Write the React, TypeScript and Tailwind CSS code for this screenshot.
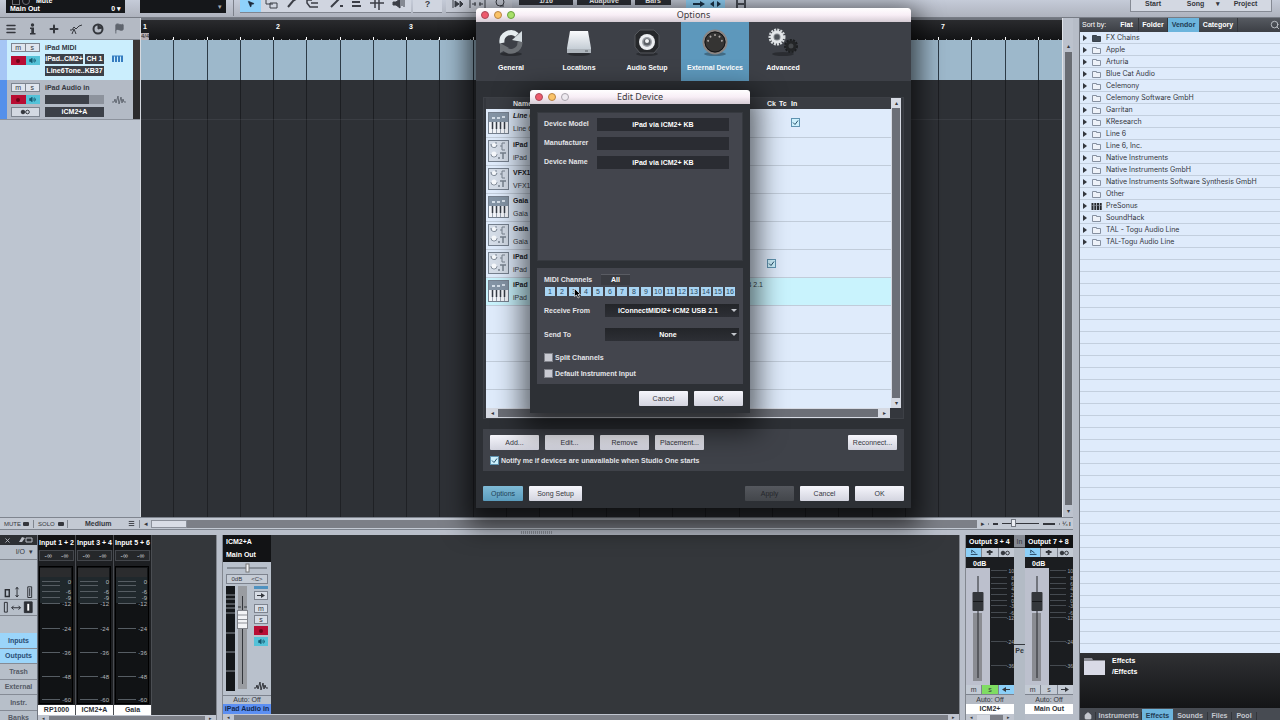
import React from "react";
import clsx from "clsx";
import {
  Flag,
  House,
  Menu,
  MousePointer2,
  Plus,
  Search,
  Volume2,
  X,
} from "lucide-react";

const vendors = [
  "FX Chains",
  "Apple",
  "Arturia",
  "Blue Cat Audio",
  "Celemony",
  "Celemony Software GmbH",
  "Garritan",
  "KResearch",
  "Line 6",
  "Line 6, Inc.",
  "Native Instruments",
  "Native Instruments GmbH",
  "Native Instruments Software Synthesis GmbH",
  "Other",
  "PreSonus",
  "SoundHack",
  "TAL - Togu Audio Line",
  "TAL-Togu Audio Line",
];

const devices = [
  { name: "Line 6", sub: "Line 6", keys: true, input: true, italic: true },
  { name: "iPad", sub: "iPad" },
  { name: "VFX1", sub: "VFX1" },
  { name: "Gaia", sub: "Gaia", keys: true },
  { name: "Gaia", sub: "Gaia" },
  { name: "iPad", sub: "iPad", clock: true },
  { name: "iPad", sub: "iPad", keys: true, selected: true, port: "USB 2.1" },
];

const inputs = [
  { title: "Input 1 + 2", label: "RP1000" },
  { title: "Input 3 + 4", label: "ICM2+A" },
  { title: "Input 5 + 6", label: "Gaia" },
];

const scale = [
  { y: 17, label: "0" },
  { y: 21, label: "" },
  { y: 27, label: "-6" },
  { y: 33, label: "-9" },
  { y: 39, label: "-12" },
  { y: 64, label: "-24" },
  { y: 88, label: "-36" },
  { y: 112, label: "-48" },
  { y: 135, label: "-60" },
];

const outScale = [
  { y: 3, label: "10" },
  { y: 10, label: "8" },
  { y: 16, label: "6" },
  { y: 21, label: "4" },
  { y: 27, label: "2" },
  { y: 33, label: "0" },
  { y: 38, label: "-3" },
  { y: 45, label: "-6" },
  { y: 50, label: "-12" },
  { y: 74, label: "-24" },
  { y: 98, label: "-36" },
];

type ButtonProps = {
  children: React.ReactNode;
  className?: string;
};

function PushButton({ children, className }: ButtonProps) {
  return (
    <button
      className={clsx(
        "h-[15px] rounded-[1px] text-center whitespace-nowrap",
        className ||
          "w-[49px] bg-linear-to-b from-[#f6f6fc] to-[#d3d4df] text-[#34363d]",
      )}
    >
      {children}
    </button>
  );
}

function Lights({ inactive }: { inactive?: boolean }) {
  return (
    <div className="absolute top-[3px] left-[5px] flex gap-[5px]">
      <span className="size-2 rounded-full border border-[#a8495a] bg-[#ee5a6d]" />
      <span className="size-2 rounded-full border border-[#b98443] bg-[#fbc368]" />
      <span
        className={clsx(
          "size-2 rounded-full border",
          inactive
            ? "border-[#a9a4ac] bg-[#eeeaf0]"
            : "border-[#6aa03f] bg-[#a8e069]",
        )}
      />
    </div>
  );
}

function TitleBar({ title, inactive }: { title: string; inactive?: boolean }) {
  return (
    <div className="relative h-[14px] rounded-t-[3px] bg-linear-to-b from-white via-[#f8eef6] to-[#d5ccd4] text-center font-['Noto_Sans',sans-serif] text-[9px] leading-[14px] text-[#3c3a40]">
      <Lights inactive={inactive} />
      {title}
    </div>
  );
}

function Tick({ checked, id }: { checked?: boolean; id: string }) {
  return (
    <span className="relative block size-[9px] shrink-0">
      <input
        id={id}
        type="checkbox"
        aria-label={id}
        defaultChecked={checked}
        className="block size-[9px] appearance-none border border-[#82848c] bg-[#c9cad2] checked:border-[#5f93b0] checked:bg-[#cdf0fc]"
      />
      {checked && (
        <svg
          viewBox="0 0 9 9"
          className="pointer-events-none absolute inset-0 size-[9px]"
        >
          <path d="M2 4.5 4 6.5 7 2.5" fill="none" stroke="#25506b" />
        </svg>
      )}
    </span>
  );
}

function Waves({ color = "#646a74" }: { color?: string }) {
  return (
    <svg viewBox="0 0 14 10" className="h-[10px] w-[14px]">
      <path
        d="M0 7h2l1-3 1 4 2-7 1 8 2-7 1 6 1-4 1 3h2"
        fill="none"
        stroke={color}
      />
    </svg>
  );
}

function StereoDots() {
  return (
    <svg viewBox="0 0 12 6" className="h-[6px] w-3">
      <circle cx="3" cy="3" r="1.8" fill="#34373d" stroke="#34373d" />
      <circle cx="7.5" cy="3" r="1.8" fill="none" stroke="#34373d" />
    </svg>
  );
}

// small m / s / rec / monitor buttons
function MiniButtons() {
  return (
    <div className="grid w-[29px] grid-cols-2">
      <button className="h-[9px] border border-[#7d8590] bg-[#dfe5ee] leading-[7px]">
        m
      </button>
      <button className="h-[9px] border border-l-0 border-[#7d8590] bg-[#dfe5ee] leading-[7px]">
        s
      </button>
    </div>
  );
}

function RecButtons() {
  return (
    <div className="grid h-[9px] w-[29px] grid-cols-2">
      <button
        aria-label="Record"
        className="flex items-center justify-center bg-[#b80d34]"
      >
        <span className="size-1 rounded-full bg-[#6d0419]" />
      </button>
      <button
        aria-label="Monitor"
        className="flex items-center justify-center bg-[#54c2d8]"
      >
        <Volume2 className="size-[7px] fill-[#155a70] text-[#155a70]" />
      </button>
    </div>
  );
}

const field =
  "bg-[#3c4048] text-white font-bold text-center h-[10px] leading-[10px] whitespace-nowrap overflow-hidden";

function TopBar() {
  return (
    <header className="flex h-[18px] shrink-0 items-start overflow-hidden border-b border-[#777c85] bg-linear-to-b from-[#c5cbd8] to-[#aeb3be]">
      <div className="flex w-[140px] pl-[6px]">
        <div className="flex h-[13px] w-[119px] flex-col justify-end bg-[#15171a] px-1 font-bold text-white">
          <div className="flex items-center gap-[2px] pl-[2px]">
            <span className="size-[8px] border border-[#6a6d73]" />
            <span className="size-[8px] rounded-full border border-[#6a6d73]" />
            <span className="pl-1">Mute</span>
          </div>
          <div className="flex justify-between">
            <span>Main Out</span>
            <span>0 ▾</span>
          </div>
        </div>
      </div>
      <div className="flex h-[13px] w-[86px] items-center justify-end bg-[#15171a] pr-1 text-[#a8abb2]">
        ▾
      </div>
      <div className="ml-[7px] h-4 w-px bg-[#7c818b]" />
      <div className="ml-[6px] flex h-[13px] w-[171px] border-b border-[#80858f] bg-[#d0d5e0] text-[#3b3e46]">
        <div className="flex h-3 w-[21px] justify-center bg-[#8fd2fb]">
          <MousePointer2 className="size-2 fill-[#1c2a3c] text-[#1c2a3c]" />
        </div>
        <svg
          viewBox="0 0 150 12"
          className="h-3 w-[150px]"
          fill="none"
          stroke="currentColor"
        >
          <path d="M5 0v4h7M9 3h7v5h-7z" />
          <path d="M27 7 32 1l3-2" strokeWidth="2" />
          <path d="M51 0h-5v3l3 4h8M50 3h7" strokeWidth="1.5" />
          <path d="M70 7 78-1M79 6h3" strokeWidth="2" />
          <path d="M91 2h8M91 6h9" strokeWidth="2" />
          <path d="M109 3h14M114 0v8M118 0v10" strokeWidth="1.5" />
          <path d="M132 2h3l4-3v9l-4-3h-3z" fill="currentColor" />
          <path d="M141 0v6M143-1v8" />
        </svg>
      </div>
      <div className="ml-[2px] h-[13px] w-[29px] border-b border-[#80858f] bg-[#d0d5e0] text-center text-[9px] font-bold text-[#3b3e46]">
        ?
      </div>
      <div className="ml-1 h-[13px] w-[66px] border-b border-[#80858f] bg-[#c8cdd8] text-[#3b3e46]">
        <svg
          viewBox="0 0 66 12"
          className="h-3 w-[66px]"
          fill="currentColor"
          stroke="currentColor"
        >
          <path d="M7 0v8M9 1l4 3-4 3zM14 1l3 3-3 3zM24 0v8M39 0v8" />
          <path d="M26 4h4M33 4h4M29 2v4M34 2v4" />
          <circle cx="54" cy="2" r="4" fill="none" />
          <path d="M54 6h4" />
        </svg>
      </div>
      <div className="ml-[7px] flex gap-[4px] font-bold text-white">
        {["1/16", "Adaptive", "Bars"].map((item) => (
          <div
            key={item}
            className="flex h-[5px] w-[54px] items-end justify-center overflow-hidden bg-[#2d3036] last:w-[36px]"
          >
            {item}
          </div>
        ))}
      </div>
      <div className="ml-[15px] flex h-2 w-[39px] justify-evenly bg-[#92d4fa]">
        <svg viewBox="0 0 30 8" className="h-2 w-[30px]" fill="#1b354b">
          <path d="M2 3h7V1l5 3-5 3V5H2zM19 4l4-3v6zM30 4l-4-3v6z" />
        </svg>
      </div>
      <svg
        viewBox="0 0 10 8"
        className="ml-[11px] h-2 w-[10px]"
        fill="none"
        stroke="#4b4f58"
        strokeWidth="2"
      >
        <path d="M1 0v8M9 0v8M1 4h8" />
      </svg>
      <nav className="mr-2 ml-auto flex h-[12px] w-[142px] items-center border border-t-0 border-[#858a94] bg-[#d3d8e2] pb-1 font-bold text-[#34363c]">
        <button className="w-[44px]">Start</button>
        <button className="w-[41px]">Song</button>
        <span>▾</span>
        <button className="flex-1">Project</button>
      </nav>
    </header>
  );
}

function TrackList() {
  return (
    <div className="flex w-[140px] shrink-0 flex-col bg-[#bdc5d0] text-[#34373d]">
      <div className="flex h-[22px] shrink-0 items-center gap-[10px] border-b border-[#858b95] bg-[#b4bac4] px-[5px]">
        <Menu className="size-3" strokeWidth={3} />
        <svg viewBox="0 0 11 12" className="h-3 w-[11px]" fill="currentColor">
          <circle cx="5.5" cy="2" r="1.700" />
          <path d="M3 4.500h4V10h1.500v1.500H3V10h1.300V6H3z" />
        </svg>
        <Plus className="size-3" strokeWidth={4} />
        <svg
          viewBox="0 0 12 12"
          className="size-3"
          fill="none"
          stroke="currentColor"
        >
          <path d="M0 7h2l2-3 2 2 3-3 3-1M2 11l2-5 2 5" />
        </svg>
        <svg
          viewBox="0 0 12 12"
          className="size-3"
          fill="none"
          stroke="currentColor"
        >
          <circle cx="6" cy="6" r="4.500" strokeWidth="2" />
          <path d="M6 2v4l4-1z" fill="currentColor" />
        </svg>
        <Flag className="size-[11px] fill-[#5f656e] text-[#5f656e]" />
      </div>

      {/* iPad MIDI */}
      <div className="flex h-10 bg-[#cbeefd]">
        <div className="w-[7px] bg-[#a6c6f5]" />
        <div className="ml-1 flex w-[34px] flex-col gap-1 pt-[3px]">
          <MiniButtons />
          <RecButtons />
        </div>
        <div className="flex w-[59px] flex-col gap-[2px] pt-[3px]">
          <span className="h-[9px] leading-[9px] font-bold">iPad MIDI</span>
          <div className="flex gap-[2px]">
            <div className={clsx(field, "w-[38px]")}>iPad..CM2+</div>
            <div className={clsx(field, "flex-1")}>CH 1</div>
          </div>
          <div className={field}>Line6Tone..KB37</div>
        </div>
        <svg viewBox="0 0 11 8" className="mt-[15px] ml-2 h-2 w-[11px]">
          <path d="M1 1v6M4 1v6M7 1v6M10 1v6" stroke="#357cc0" strokeWidth="2" />
          <path d="M0 1h11" stroke="#357cc0" />
        </svg>
        <div className="ml-auto w-[7px] bg-[#3a3736]" />
      </div>

      {/* iPad Audio in */}
      <div className="flex h-10 border-b border-[#8c929c] bg-[#b3bac5]">
        <div className="w-[7px] bg-[#5590ea]" />
        <div className="ml-1 flex w-[34px] flex-col gap-[3px] pt-[3px]">
          <MiniButtons />
          <RecButtons />
          <button
            aria-label="Stereo"
            className="flex h-[10px] w-[29px] items-center justify-center border border-[#7d8590] bg-[#d3d9e2]"
          >
            <StereoDots />
          </button>
        </div>
        <div className="flex w-[59px] flex-col gap-[3px] pt-[3px]">
          <span className="h-[9px] leading-[9px] font-bold">iPad Audio in</span>
          <div className="h-[9px] bg-[#8d939d]">
            <div className="h-full w-3/4 bg-[#3c4048]" />
          </div>
          <div className={field}>iCM2+A</div>
        </div>
        <div className="mt-[15px] ml-2">
          <Waves />
        </div>
        <div className="ml-auto w-[7px] bg-[#2b2b2d]" />
      </div>
    </div>
  );
}

function Timeline() {
  return (
    <div className="relative isolate flex min-w-0 flex-1 overflow-hidden border-l border-[#d5d9df] bg-[#2e3136]">
      {[1, 2, 3, 4, 5, 6, 7].map((bar) => (
        <div key={bar} className="flex w-[133px] shrink-0 flex-col">
          <div className="relative h-[22px] border-t-2 border-[#70757e] bg-linear-to-b from-[#2a2b2e] to-[#131416] text-white">
            <span className="block pt-[3px] pl-[2px] font-bold">{bar}</span>
            {bar === 1 && (
              <span className="absolute bottom-0 left-0 h-[7px] bg-[#b9b0b4] text-[6px] leading-[7px] text-[#28282b]">
                4/4
              </span>
            )}
            <div className="absolute inset-x-0 bottom-0 h-px bg-[repeating-linear-gradient(to_right,transparent_0_7px,#9b9da2_7px_8px)]" />
          </div>
          <div className="grid flex-1 grid-cols-4">
            {[0, 1, 2, 3].map((beat) => (
              <div key={beat} className="flex flex-col">
                <div className="z-1 -mt-[3px] h-[3px] border-r border-white" />
                <div className="h-10 border-r border-[#2d3b47] bg-[#9db8cb]" />
                <div className="h-10 border-r border-b border-[#1c1e22] border-b-[#3a3d43]" />
                <div className="flex-1 border-r border-[#1f2125]" />
              </div>
            ))}
          </div>
        </div>
      ))}
    </div>
  );
}

function ScrollH({ thumb }: { thumb: string }) {
  return (
    <div className="flex h-[6px] shrink-0 items-center bg-[#c0c5cf] text-[5px] leading-[6px] text-[#34363c]">
      <span className="w-[11px] text-center">◂</span>
      <div className="h-[5px] flex-1 bg-[#7d8088]">
        <div className={clsx("h-full bg-[#d4d8e1]", thumb)} />
      </div>
      <span className="w-[11px] text-center">▸</span>
    </div>
  );
}

function BottomBar() {
  return (
    <div className="flex h-[13px] shrink-0 items-center border-y border-[#7f858f] bg-[#c3c9d3] text-[#34363c]">
      <div className="flex w-[34px] items-center gap-[2px] border-r border-[#7f858f] pl-1 text-[6px]">
        MUTE <span className="h-1 w-[6px] rounded-[1px] bg-[#34363c]" />
      </div>
      <div className="flex w-[34px] items-center gap-[3px] border-r border-[#7f858f] pl-1 text-[6px]">
        SOLO <span className="h-1 w-[6px] rounded-[1px] bg-[#34363c]" />
      </div>
      <div className="flex w-[72px] items-center justify-between border-r border-[#7f858f] pr-1 pl-[17px] font-bold">
        Medium <Menu className="size-[7px]" strokeWidth={3} />
      </div>
      <span className="w-[11px] text-center">◂</span>
      <div className="h-[8px] flex-1 bg-[#7c7f87]">
        <div className="h-full w-[36px] rounded-[1px] border border-[#8b909a] bg-[#d9dde6]" />
      </div>
      <span className="w-[11px] text-center">▸</span>
      <div className="flex w-[72px] items-center gap-1 border-x border-[#7f858f] px-1">
        <span className="h-[2px] w-[5px] bg-[#34363c]" />
        <div className="relative h-px flex-1 bg-[#34363c]">
          <span className="absolute -top-1 left-[9px] h-[8px] w-[5px] border border-[#757a84] bg-[#eceef4]" />
        </div>
        <span className="h-[2px] w-[12px] bg-[#34363c]" />
      </div>
      <span className="w-[13px] text-center text-[6px] font-bold">¼ I</span>
    </div>
  );
}

function MixerTabs() {
  return (
    <div className="flex w-[38px] shrink-0 flex-col border-r border-[#70757e] bg-[#b7bfc9] text-[#34373d]">
      <div className="flex h-[10px] shrink-0 items-center justify-around bg-[#2d3034] text-[#b9bdc5]">
        <X className="size-[7px]" strokeWidth={3} />
        <svg viewBox="0 0 15 6" className="h-[6px] w-[15px]">
          <path d="M1 5 4 0l3 1-3 4z" fill="currentColor" />
          <path d="M8 1h6v4H8z" fill="none" stroke="currentColor" />
        </svg>
      </div>
      <button className="flex h-[15px] shrink-0 items-center justify-end gap-1 border-b border-[#80868f] pr-1">
        I/O <span>▾</span>
      </button>
      <div className="flex h-[56px] shrink-0 flex-col justify-end border-b border-[#80868f]">
        <svg
          viewBox="0 0 38 34"
          className="h-[34px] w-full"
          fill="none"
          stroke="#2d3036"
        >
          <path d="M5.5 8.500h4v7h-4z" strokeWidth="1.500" />
          <path d="M17.500 6v10M16 8l1.500-2 1.500 2M16 14l1.500 2 1.500-2" />
          <path d="M28.500 5.500h4v11h-4zM30.500 7v8" />
          <path d="M0 18.500h38" stroke="#80868f" />
          <path d="M4.500 21.500h3v10h-3z" />
          <path d="M12 27h9M14 25l-2 2 2 2M19 25l2 2-2 2" />
          <path d="M25 21h8v11h-8z" fill="#2d3036" />
          <path d="M29 23v7" stroke="#fff" strokeWidth="2" />
        </svg>
      </div>
      <div className="mt-[17px] grid h-[93px] shrink-0 grid-rows-6 font-bold">
        {["Inputs", "Outputs", "Trash", "External", "Instr.", "Banks"].map(
          (item, index) => (
            <button
              key={item}
              className={clsx(
                "border-b border-[#858b95] pt-px text-center",
                index < 2 ? "bg-[#9bd5fa] text-[#2b4e75]" : "text-[#555b66]",
              )}
            >
              {item}
            </button>
          ),
        )}
      </div>
    </div>
  );
}

function InputChannel({ title, label }: { title: string; label: string }) {
  return (
    <div className="flex w-[38px] shrink-0 flex-col border-r border-[#4a4d52] bg-[#1d1f22]">
      <div className="h-[15px] bg-[#111214] text-center leading-[15px] font-bold whitespace-nowrap text-white">
        {title}
      </div>
      <div className="mx-px flex h-[11px] justify-around border border-[#44474c] bg-[#25272a] leading-[9px] text-[#d2d4d9]">
        <span>-∞</span>
        <span>-∞</span>
      </div>
      <div className="flex-1 pt-1">
        <svg viewBox="0 0 37 140" className="h-[140px] w-[37px]">
          <rect x="1" y="1" width="34" height="138" fill="#111315" />
          <rect x="2" y="3" width="31" height="9" fill="#2b2c2e" />
          <rect x="2" y="12" width="31" height="26" fill="#20282c" />
          <rect
            x="1.500"
            y="1.500"
            width="33"
            height="137"
            fill="none"
            stroke="#000"
            strokeWidth="1"
          />
          {scale.map((s) => (
            <g key={s.y}>
              <path d={`M4 ${s.y - 0.5}H22`} stroke="#565d63" />
              <text
                x="33"
                y={s.y + 2}
                textAnchor="end"
                fontSize="6"
                fill="#b4b9be"
              >
                {s.label}
              </text>
            </g>
          ))}
        </svg>
      </div>
      <div className="h-[10px] bg-white text-center leading-[10px] font-bold text-[#2d2f34]">
        {label}
      </div>
    </div>
  );
}

function AudioChannel() {
  return (
    <div className="flex w-[48px] shrink-0 flex-col bg-[#b9c1cc]">
      <div className="flex h-[27px] flex-col justify-around bg-[#121315] pl-[3px] font-bold text-white">
        <span>ICM2+A</span>
        <span>Main Out</span>
      </div>
      <svg viewBox="0 0 48 12" className="h-3 w-full">
        <path d="M4 6h40" stroke="#555a63" />
        <rect x="23" y="2" width="3" height="8" fill="#f4f5f8" stroke="#777" />
      </svg>
      <div className="mx-[3px] flex h-[10px] items-center justify-around border border-[#7d838e] bg-[#c5ccd6] text-[6px] text-[#34373d]">
        <span>0dB</span>
        <span>&lt;C&gt;</span>
      </div>
      <div className="flex flex-1 gap-[2px] px-[3px] pt-[2px]">
        <svg viewBox="0 0 24 106" className="h-[106px] w-6">
          <rect x="0" y="0" width="9" height="105" fill="#14171a" />
          <path
            d="M0 9h9M0 13h9M0 18h9M0 22h9M0 27h9M0 47h9M0 66h9M0 85h9"
            stroke="#8b9299"
          />
          <rect x="12" y="0" width="9" height="103" fill="#999ca1" />
          <path d="M16.500 10v88M12 21h3M18 21h3" stroke="#33363b" />
          <rect
            x="11.500"
            y="24.500"
            width="10"
            height="18"
            fill="#f2f3f6"
            stroke="#80838a"
          />
          <path d="M12 29h9M12 33.500h9M12 37h9" stroke="#8c8f96" />
        </svg>
        <div className="flex flex-1 flex-col items-end gap-[2px] text-[#34373d]">
          <span className="h-[3px] w-[14px] bg-[#4f92c0]" />
          <button
            aria-label="Send"
            className="flex h-[9px] w-[14px] items-center justify-center border border-[#7d838e] bg-[#d7dde6]"
          >
            <svg viewBox="0 0 8 5" className="h-[5px] w-2" fill="#34373d">
              <path d="M0 2h4V0l4 2.500L4 5V3H0z" />
            </svg>
          </button>
          <button className="mt-[2px] h-[9px] w-[14px] border border-[#7d838e] bg-[#d7dde6] leading-[7px]">
            m
          </button>
          <button className="h-[9px] w-[14px] border border-[#7d838e] bg-[#d7dde6] leading-[7px]">
            s
          </button>
          <button
            aria-label="Arm"
            className="flex h-[9px] w-[14px] items-center justify-center bg-[#b80d34]"
          >
            <span className="size-1 rounded-full bg-[#6d0419]" />
          </button>
          <button
            aria-label="Listen"
            className="flex h-[9px] w-[14px] items-center justify-center bg-[#54c2d8]"
          >
            <Volume2 className="size-[7px] fill-[#155a70] text-[#155a70]" />
          </button>
          <span className="mt-auto mb-1">
            <Waves color="#34373d" />
          </span>
        </div>
      </div>
      <div className="h-[9px] border-t border-[#7d838e] text-center text-[#34373d]">
        Auto: Off
      </div>
      <div className="h-[10px] bg-[#5c8ff2] text-center leading-[10px] font-bold whitespace-nowrap text-[#10284f]">
        iPad Audio in
      </div>
    </div>
  );
}

type OutputProps = { title: string; label: string; solo?: boolean };

function OutputChannel({ title, label, solo }: OutputProps) {
  return (
    <div className="flex w-[48px] shrink-0 flex-col bg-[#1b1d20]">
      <div className="h-[13px] bg-[#111214] pl-[3px] leading-[13px] font-bold whitespace-nowrap text-white">
        {title}
      </div>
      <div className="grid h-[9px] grid-cols-3 gap-px bg-[#7d838e]">
        <button aria-label="Link" className="bg-[#8ccff7]">
          <svg viewBox="0 0 16 9" className="h-[9px] w-full">
            <path d="M5 6.500h7M6 5V2l4 3" stroke="#23425c" fill="none" />
          </svg>
        </button>
        <button aria-label="Pin" className="bg-[#c3cad4]">
          <svg viewBox="0 0 16 9" className="h-[9px] w-full">
            <path d="M5 4h6M8 2v5" stroke="#34373d" strokeWidth="2" />
          </svg>
        </button>
        <button
          aria-label="Stereo out"
          className="flex items-center justify-center bg-[#c3cad4]"
        >
          <StereoDots />
        </button>
      </div>
      <div className="h-[11px] pl-[7px] leading-[13px] font-bold text-white">0dB</div>
      <div className="flex-1">
        <svg viewBox="0 0 48 117" className="h-[117px] w-full">
          <rect x="0" y="0" width="24" height="117" fill="#bcc0cd" />
          <rect x="7" y="45" width="9" height="68" fill="#8a8c92" />
          <path d="M12 8v102" stroke="#26282c" />
          <rect x="6.500" y="24" width="11" height="19" rx="1" fill="#34373b" />
          <path d="M7 33.500h10" stroke="#16171a" />
          {outScale.map((s) => (
            <g key={s.y}>
              <path d={`M25 ${s.y - 0.5}H41`} stroke="#454a50" />
              <text
                x="48"
                y={s.y + 2}
                textAnchor="end"
                fontSize="5"
                fill="#a2a7ad"
              >
                {s.label}
              </text>
            </g>
          ))}
        </svg>
      </div>
      <div className="grid h-[9px] grid-cols-3 gap-px bg-[#7d838e] text-[#34373d]">
        <button className="bg-[#c3cad4]">m</button>
        <button className={solo ? "bg-[#7fdc62]" : "bg-[#c3cad4]"}>s</button>
        <button
          aria-label="Route"
          className={clsx(
            "flex items-center justify-center",
            solo ? "bg-[#8ccff7]" : "bg-[#c3cad4]",
          )}
        >
          <svg viewBox="0 0 8 5" className="h-[5px] w-2" fill="#34373d">
            <path
              d={
                solo
                  ? "M8 2H4V0L0 2.500 4 5V3h4z"
                  : "M0 2h4V0l4 2.500L4 5V3H0z"
              }
            />
          </svg>
        </button>
      </div>
      <div className="h-[10px] border-t border-[#7d838e] bg-[#b4bac4] text-center leading-[9px] text-[#34373d]">
        Auto: Off
      </div>
      <div className="h-[10px] bg-white text-center leading-[10px] font-bold text-[#2d2f34]">
        {label}
      </div>
    </div>
  );
}

function Mixer() {
  return (
    <div className="flex h-[185px] shrink-0 overflow-hidden bg-[#34373b]">
      <MixerTabs />
      <div className="flex w-[178px] shrink-0 flex-col">
        <div className="flex flex-1">
          {inputs.map((item) => (
            <InputChannel key={item.label} {...item} />
          ))}
        </div>
        <ScrollH thumb="w-0" />
      </div>
      <div className="w-[7px] shrink-0 border-x border-[#82878f] bg-[#b9bfca]" />
      <div className="flex min-w-0 flex-1 flex-col">
        <div className="flex flex-1">
          <AudioChannel />
        </div>
        <ScrollH thumb="w-0" />
      </div>
      <div className="w-[7px] shrink-0 border-x border-[#82878f] bg-[#b9bfca]" />
      <div className="flex w-[107px] shrink-0">
        <div className="flex w-[48px] flex-col">
          <div className="flex flex-1">
            <OutputChannel title="Output 3 + 4" label="ICM2+" solo />
          </div>
          <ScrollH thumb="w-1/2" />
        </div>
        <div className="flex w-[11px] flex-col bg-[#b3bbc5] text-[#34373d]">
          <div className="h-[13px] border-b border-[#34373d] bg-[#858a93] text-center leading-[13px]">
            In
          </div>
          <div className="mt-auto h-[76px] border-t border-[#34373d] pt-[2px] text-center font-bold">
            Pe
          </div>
        </div>
        <div className="flex w-[48px] bg-[#b7bdc8] pb-[6px]">
          <OutputChannel title="Output 7 + 8" label="Main Out" />
        </div>
      </div>
    </div>
  );
}

function Browser() {
  return (
    <aside className="flex w-[201px] shrink-0 flex-col border-l border-[#6e737c] bg-[#dfebfb] text-[#33363d]">
      <div className="flex h-[14px] shrink-0 items-stretch bg-linear-to-b from-[#565a61] to-[#3c3f45] pl-[2px] leading-[14px] text-white">
        <span className="w-[33px]">Sort by:</span>
        <button className="w-[24px] border-r border-[#34373c] font-bold">
          Flat
        </button>
        <button className="w-[29px] border-r border-[#34373c] font-bold">
          Folder
        </button>
        <button className="w-[31px] bg-[#6db5dd] font-bold text-[#1e3b54]">
          Vendor
        </button>
        <button className="w-[39px] border-r border-[#34373c] font-bold">
          Category
        </button>
        <Search className="mt-[2px] ml-auto size-[10px] text-[#c9ccd2]" />
      </div>
      <ul className="min-h-0 flex-1 overflow-hidden bg-[repeating-linear-gradient(to_bottom,transparent_0_11px,#c3cfde_11px_12px)] font-['Inter',sans-serif]">
        {vendors.map((vendor) => (
          <li key={vendor} className="flex h-3 items-center pl-[3px]">
            <svg viewBox="0 0 4 6" className="h-[6px] w-1" fill="#33363d">
              <path d="M0 0 4 3 0 6z" />
            </svg>
            <svg viewBox="0 0 11 9" className="ml-1 h-[9px] w-[11px]">
              {vendor === "PreSonus" ? (
                <g>
                  <path
                    d="M.5 1h2v7h-2zM3.300 1h2v7h-2zM6 1h2v7H6zM8.700 1h2v7h-2z"
                    fill="#26282d"
                  />
                  <path d="M0 3.500h11" stroke="#8b9099" strokeWidth=".6" />
                </g>
              ) : (
                <path
                  d="M1.500 7.500v-6h4v1h4v5z"
                  fill={vendor === "FX Chains" ? "#414b56" : "#eef2f9"}
                  stroke={vendor === "FX Chains" ? "#39424c" : "#8690a0"}
                />
              )}
            </svg>
            <span className="ml-1 whitespace-nowrap">{vendor}</span>
          </li>
        ))}
      </ul>
      <div className="flex h-[55px] shrink-0 gap-[7px] bg-linear-to-b from-[#303134] to-[#141517] pt-1 pl-1 font-bold text-white">
        <svg viewBox="0 0 21 18" className="h-[18px] w-[21px]">
          <path d="M0 1h8l1 2h12v15H0z" fill="#8d8e96" />
          <path d="M0 4h21v14H0z" fill="#d9dae6" />
        </svg>
        <div className="flex flex-col gap-[3px]">
          <span>Effects</span>
          <span>/Effects</span>
        </div>
      </div>
      <nav className="flex h-[12px] shrink-0 items-end bg-[#474b52] font-bold text-[#c5c8cf]">
        <button aria-label="Home" className="flex w-[15px] justify-center">
          <House className="size-[8px] fill-[#c5c8cf]" />
        </button>
        <button className="w-[47px] border-x border-[#33363b]">
          Instruments
        </button>
        <button className="h-[11px] w-[31px] bg-[#6db5dd] pt-[3px] text-[#1e3b54]">
          Effects
        </button>
        <button className="w-[35px] border-r border-[#33363b]">Sounds</button>
        <button className="w-[24px] border-r border-[#33363b]">Files</button>
        <button className="w-[25px] border-r border-[#33363b]">Pool</button>
      </nav>
    </aside>
  );
}

function DeviceIcon({ keys }: { keys?: boolean }) {
  return (
    <svg viewBox="0 0 21 22" className="block h-[22px] w-[21px]">
      <rect
        x=".5"
        y=".5"
        width="20"
        height="21"
        fill="#d5dde8"
        stroke="#76818f"
      />
      {keys ? (
        <g>
          <rect x="1" y="1" width="19" height="9" fill="#8595a6" />
          <path d="M4 6h3M9 6h3M14 5h3" stroke="#d6e0ea" strokeWidth="2" />
          <rect x="1" y="10" width="19" height="11" fill="#f3f5f9" />
          <path
            d="M4.500 10v7M8.500 10v7M12.500 10v7M16.500 10v7"
            stroke="#363c46"
            strokeWidth="1.500"
          />
          <path d="M4.500 17v4M8.500 17v4M12.500 17v4M16.500 17v4" stroke="#9aa3af" />
        </g>
      ) : (
        <g fill="none" stroke="#78828f">
          <path d="M3 4a3 3 0 0 0 6 1M8 2v2" />
          <circle cx="6" cy="5" r="2" fill="#f7f9fc" stroke="none" />
          <path d="M17 3h-3v7h3M12 6h2" />
          <path d="M3 14a3 3 0 1 0 6 0" />
          <circle cx="6" cy="14" r="2.500" fill="#f7f9fc" stroke="none" />
          <path d="M10 18h2M12 13h6M15 13v6" strokeWidth="1.500" />
        </g>
      )}
    </svg>
  );
}

const tabs = ["General", "Locations", "Audio Setup", "External Devices", "Advanced"];

function TabIcon({ name }: { name: string }) {
  return (
    <svg viewBox="0 0 30 30" className="size-[30px]">
      <defs>
        <linearGradient id="metal" x1="0" y1="0" x2="0" y2="1">
          <stop offset="0" stopColor="#fafbfd" />
          <stop offset="1" stopColor="#b9c3cc" />
        </linearGradient>
      </defs>
      <ellipse cx="15" cy="27" rx="11" ry="2" fill="#000" opacity=".3" />
      {name === "General" && (
        <g>
          <path
            d="M24 15a9 9 0 0 1-16 6"
            fill="none"
            stroke="#6b6f74"
            strokeWidth="5"
          />
          <path d="M4 16v10l9-5z" fill="#6b6f74" />
          <path
            d="M6 16a9 9 0 0 1 15-8"
            fill="none"
            stroke="#e6edf0"
            strokeWidth="5"
          />
          <path d="M26 4v11l-10-2z" fill="#d5dde1" />
        </g>
      )}
      {name === "Locations" && (
        <g>
          <path d="M6 4h18l3 17v5H3v-5z" fill="url(#metal)" />
          <path d="M3 22h24v4H3z" fill="#aeb5bc" />
          <path d="M21 24h3" stroke="#5c6369" />
        </g>
      )}
      {name === "Audio Setup" && (
        <g>
          <path
            d="M8 3h14l5 5v12l-5 6H8l-5-6V8z"
            fill="#26282b"
            stroke="#54575c"
          />
          <circle cx="15" cy="15" r="8" fill="#eceef1" />
          <circle cx="15" cy="15" r="5" fill="#9da1a7" />
          <circle cx="15" cy="15" r="3.500" fill="#5c6066" />
          <circle cx="15" cy="14" r="2" fill="#f4f5f7" />
        </g>
      )}
      {name === "External Devices" && (
        <g>
          <circle
            cx="15"
            cy="15"
            r="11.500"
            fill="#353433"
            stroke="#8a8583"
            strokeWidth="2"
          />
          <circle cx="15" cy="15" r="10" fill="none" stroke="#151516" />
          {[-80, -40, 0, 40, 80].map((a) => (
            <circle
              key={a}
              cx="15"
              cy="8"
              r="1"
              fill="#aaa5a2"
              transform={`rotate(${a} 15 15)`}
            />
          ))}
        </g>
      )}
      {name === "Advanced" && (
        <g fill="none">
          <circle
            cx="9"
            cy="10"
            r="7"
            stroke="#d5d9dc"
            strokeWidth="3"
            strokeDasharray="2 1"
          />
          <circle cx="9" cy="10" r="5" fill="#82878c" stroke="#e2e5e8" strokeWidth="3" />
          <circle cx="9" cy="10" r="2.500" fill="#4c5157" />
          <circle
            cx="23"
            cy="19"
            r="5.500"
            stroke="#1c1e20"
            strokeWidth="3"
            strokeDasharray="2 1"
          />
          <circle cx="23" cy="19" r="4" fill="#44474a" stroke="#232527" strokeWidth="3" />
        </g>
      )}
    </svg>
  );
}

const fields = [
  { label: "Device Model", value: "iPad via iCM2+ KB" },
  { label: "Manufacturer", value: "" },
  { label: "Device Name", value: "iPad via iCM2+ KB" },
];

const ports = [
  { label: "Receive From", value: "iConnectMIDI2+ iCM2 USB 2.1" },
  { label: "Send To", value: "None" },
];

function EditDevice() {
  return (
    <section className="absolute top-[82px] left-[54px] flex w-[220px] flex-col rounded-t-[3px] bg-[#2d3035] text-[#e3e4e8] shadow-[0_10px_28px_8px_rgba(0,0,0,0.6)]">
      <TitleBar title="Edit Device" inactive />
      {/* device info */}
      <div className="mx-[7px] mt-2 flex h-[149px] flex-col gap-[6px] border border-[#36393f] bg-[#43454d] pt-[5px] pl-[6px]">
        {fields.map((item) => (
          <label key={item.label} className="flex h-[13px]">
            <span className="w-[53px] leading-[11px] font-bold">{item.label}</span>
            <input
              defaultValue={item.value}
              className="h-[13px] w-[132px] bg-[#2a2c32] text-center font-bold text-white"
            />
          </label>
        ))}
      </div>

      {/* midi */}
      <div className="relative mx-[7px] mt-[7px] flex h-[116px] flex-col bg-[#43454d] pt-[6px] pl-[7px]">
        <div className="flex h-[11px] items-center">
          <span className="w-[57px] font-bold">MIDI Channels</span>
          <button className="h-[11px] w-[29px] border-t border-[#5a5c63] bg-[#3a3c42] font-bold text-white">
            All
          </button>
        </div>
        <div className="mt-[2px] flex gap-[2px] pl-px">
          {Array.from({ length: 16 }, (_, i) => (
            <button
              key={i}
              className="h-[9px] w-[10px] bg-[#a9d5f3] text-center leading-[9px] text-[#29465e]"
            >
              {i + 1}
            </button>
          ))}
        </div>
        <div className="mt-2 flex flex-col gap-[11px]">
          {ports.map((item) => (
            <label key={item.label} className="relative flex h-[13px] items-center">
              <span className="w-[61px] font-bold">{item.label}</span>
              <select className="h-[13px] w-[134px] appearance-none bg-linear-to-b from-[#232529] to-[#2d2f35] pr-2 font-bold text-white [text-align-last:center]">
                <option>{item.value}</option>
              </select>
              <svg
                viewBox="0 0 6 3"
                className="absolute right-[6px] h-[3px] w-[6px]"
                fill="#c3c6cc"
              >
                <path d="M0 0h6L3 3z" />
              </svg>
            </label>
          ))}
        </div>
        <div className="mt-3 flex flex-col gap-[7px]">
          {["Split Channels", "Default Instrument Input"].map((item) => (
            <div key={item} className="flex h-[9px] items-center gap-[2px]">
              <Tick id={item} />
              <label htmlFor={item} className="font-bold">
                {item}
              </label>
            </div>
          ))}
        </div>
        {/* mouse pointer */}
        <svg viewBox="0 0 7 11" className="absolute top-[20px] left-[37px] h-[11px] w-[7px]">
          <path
            d="M.5.5v8l2-1.500 1.500 3 1.500-.8L4 6.500h2.500z"
            fill="#000"
            stroke="#fff"
            strokeWidth=".6"
          />
        </svg>
      </div>
      <div className="flex justify-end gap-[6px] px-[7px] pt-[7px] pb-[7px]">
        <PushButton>Cancel</PushButton>
        <PushButton>OK</PushButton>
      </div>
    </section>
  );
}

function DeviceTable() {
  return (
    <div className="mx-[7px] mt-4 flex h-[322px] flex-col border border-[#3d4046] bg-[#34373d] pl-[2px]">
      <div className="flex min-h-0 flex-1">
        <div className="min-w-0 flex-1 overflow-hidden bg-[#dfebfb]">
          <table className="w-full table-fixed border-collapse text-left text-[#3a3d45]">
            <thead className="bg-[#3a3d43] text-white">
              <tr className="h-[11px]">
                <th className="w-[27px]" />
                <th className="w-[144px]">Name</th>
                <th className="w-[110px]" />
                <th className="w-[12px]">Ck</th>
                <th className="w-[12px]">Tc</th>
                <th className="w-[12px]">In</th>
                <th />
              </tr>
            </thead>
            <tbody>
              {devices.map((device, index) => (
                <tr
                  key={index}
                  className={clsx(
                    "h-7 border-b border-[#c1ccda]",
                    device.selected && "bg-[#c9f3fd]",
                  )}
                >
                  <td className="pl-[2px]">
                    <DeviceIcon keys={device.keys} />
                  </td>
                  <td>
                    <div
                      className={clsx(
                        "pb-[5px] font-bold text-[#222429]",
                        device.italic && "italic",
                      )}
                    >
                      {device.name}
                    </div>
                    <div>{device.sub}</div>
                  </td>
                  <td className="pt-[3px] pr-1 text-right align-top">
                    {device.port}
                  </td>
                  <td>
                    {device.clock && <Tick id="Send clock" checked />}
                  </td>
                  <td />
                  <td>
                    {device.input && <Tick id="Default input" checked />}
                  </td>
                  <td />
                </tr>
              ))}
              {[0, 1, 2, 3].map((row) => (
                <tr key={row} className="h-7 border-b border-[#c1ccda]">
                  <td colSpan={7} />
                </tr>
              ))}
            </tbody>
          </table>
        </div>
        {/* vertical scrollbar */}
        <div className="mr-[2px] flex w-[10px] flex-col items-center bg-[#d6dae3] text-[6px] leading-[10px] text-[#34363c]">
          <span>▴</span>
          <div className="w-[8px] flex-1 bg-[#6c6f77]" />
          <span>▾</span>
        </div>
      </div>
      <div className="mr-[13px] flex h-[10px] items-center bg-[#d6dae3] text-[6px] text-[#34363c]">
        <span className="w-[12px] text-center">◂</span>
        <div className="h-[8px] flex-1 bg-[#6c6f77]" />
        <span className="w-[12px] text-center">▸</span>
      </div>
    </div>
  );
}

function OptionsWindow() {
  return (
    <section className="absolute top-[8px] left-[476px] z-10 w-[435px] rounded-t-[3px] bg-[#2d3035] shadow-[0_10px_26px_8px_rgba(0,0,0,0.65)]">
      <TitleBar title="Options" />
      <div className="flex h-[59px] bg-[#3d4047] pl-px text-white">
        {tabs.map((tab) => (
          <button
            key={tab}
            className={clsx(
              "flex w-[68px] flex-col items-center pt-[5px] font-bold whitespace-nowrap",
              tab === "External Devices" && "bg-[#5d98bc]",
            )}
          >
            <TabIcon name={tab} />
            <span className="mt-[7px]">{tab}</span>
          </button>
        ))}
      </div>

      <DeviceTable />

      <div className="mx-[7px] mt-[10px] h-[42px] bg-[#3f4249] px-[7px] pt-[6px]">
        <div className="flex gap-[6px]">
          <PushButton>Add...</PushButton>
          <PushButton>Edit...</PushButton>
          <PushButton>Remove</PushButton>
          <PushButton>Placement...</PushButton>
          <div className="ml-auto">
            <PushButton>Reconnect...</PushButton>
          </div>
        </div>
        <div className="mt-[6px] flex items-center gap-[2px] text-[#e3e4e8]">
          <Tick id="notify" checked />
          <label htmlFor="notify" className="font-bold">
            Notify me if devices are unavailable when Studio One starts
          </label>
        </div>
      </div>

      <div className="flex gap-[6px] px-[7px] pt-[15px] pb-[7px]">
        <PushButton className="w-[40px] bg-linear-to-b from-[#7fbad6] to-[#5a9cbd] text-[#1e3f57]">
          Options
        </PushButton>
        <PushButton className="w-[53px] bg-linear-to-b from-[#f6f6fc] to-[#d3d4df] text-[#34363d]">
          Song Setup
        </PushButton>
        <PushButton className="ml-auto w-[49px] bg-linear-to-b from-[#55585e] to-[#43464b] text-[#25272b]">
          Apply
        </PushButton>
        <PushButton>Cancel</PushButton>
        <PushButton>OK</PushButton>
      </div>

      <EditDevice />
    </section>
  );
}

function App() {
  return (
    <div className="relative flex h-screen flex-col overflow-hidden bg-[#b7bdc8] font-['Liberation_Sans',Arial,sans-serif] text-[7px] leading-[8px]">
      <TopBar />
      <div className="flex min-h-0 flex-1">
        <main className="flex min-w-0 flex-1 flex-col pr-[6px]">
          <div className="flex min-h-0 flex-1">
            <TrackList />
            <Timeline />
            {/* timeline scrollbar */}
            <div className="flex w-[11px] shrink-0 flex-col items-center border-l border-[#e0e3e8] bg-[#bcc2cd] pt-[22px] text-[6px] leading-[12px] text-[#34363c]">
              <span>▴</span>
              <div className="w-[7px] flex-1 bg-[#696c73]" />
              <span>▾</span>
            </div>
          </div>
          <BottomBar />
          <div className="flex h-[5px] shrink-0 items-center justify-center bg-[#b9bfca]">
            <div className="h-[3px] w-[32px] bg-[repeating-linear-gradient(to_right,#8b9099_0_1px,transparent_1px_2px)]" />
          </div>
          <Mixer />
        </main>
        <Browser />
      </div>
      <OptionsWindow />
    </div>
  );
}

export default App;
